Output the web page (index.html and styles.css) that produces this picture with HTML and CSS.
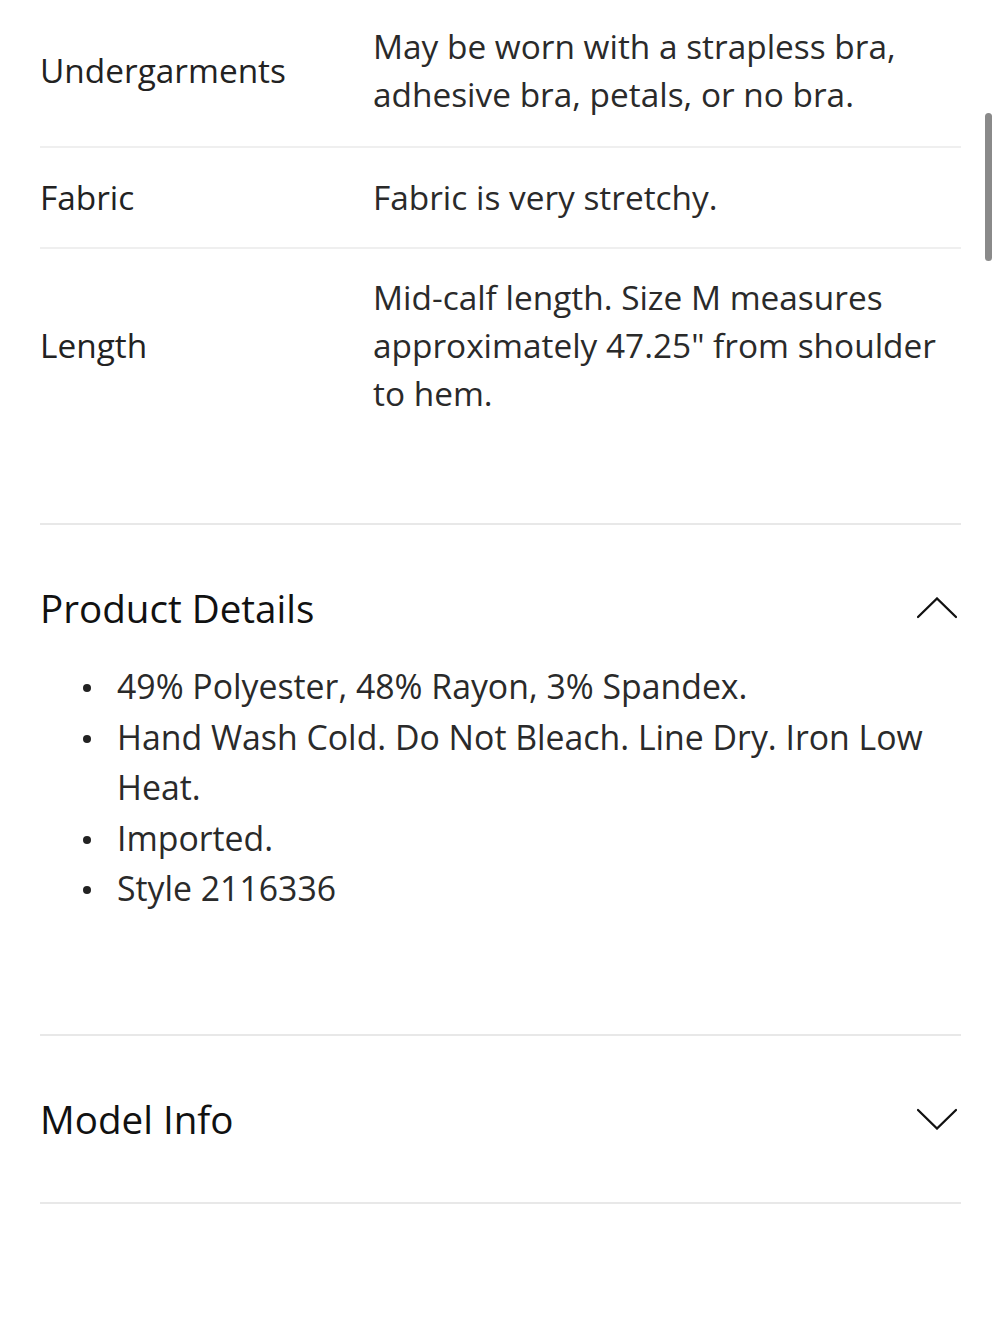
FILE: index.html
```html
<!DOCTYPE html>
<html lang="en">
<head>
<meta charset="utf-8">
<title>Product Details</title>
<link rel="stylesheet" href="styles.css">
</head>
<body>
<div class="page">
  <section class="specs">
    <div class="spec-row first">
      <div class="spec-label">Undergarments</div>
      <div class="spec-value">May be worn with a strapless bra, adhesive bra, petals, or no bra.</div>
    </div>
    <div class="spec-row">
      <div class="spec-label">Fabric</div>
      <div class="spec-value">Fabric is very stretchy.</div>
    </div>
    <div class="spec-row last">
      <div class="spec-label">Length</div>
      <div class="spec-value">Mid-calf length. Size M measures approximately 47.25" from shoulder to hem.</div>
    </div>
  </section>

  <section class="accordion open">
    <div class="acc-header">
      <h2 class="acc-title">Product Details</h2>
      <svg class="chevron" width="40" height="22" viewBox="0 0 40 22" aria-hidden="true">
        <polyline points="1,20 20,1.5 39,20" fill="none" stroke="#111" stroke-width="2.3" stroke-linecap="round" stroke-linejoin="miter"/>
      </svg>
    </div>
    <ul class="details">
      <li>49% Polyester, 48% Rayon, 3% Spandex.</li>
      <li>Hand Wash Cold. Do Not Bleach. Line Dry. Iron Low Heat.</li>
      <li>Imported.</li>
      <li>Style 2116336</li>
    </ul>
  </section>

  <section class="accordion">
    <div class="acc-header">
      <h2 class="acc-title">Model Info</h2>
      <svg class="chevron" width="40" height="22" viewBox="0 0 40 22" aria-hidden="true">
        <polyline points="1,2 20,20.5 39,2" fill="none" stroke="#111" stroke-width="2.3" stroke-linecap="round" stroke-linejoin="miter"/>
      </svg>
    </div>
  </section>
</div>
<div class="scrollbar"></div>
</body>
</html>
```

FILE: styles.css
```css
html, body {
  margin: 0;
  padding: 0;
  background: #ffffff;
}

body {
  font-family: "Open Sans", "Liberation Sans", sans-serif;
  color: #2a2a2a;
  width: 1000px;
  height: 1333px;
  overflow: hidden;
  position: relative;
}

.page {
  padding: 0 39px 0 40px;
}

.specs {
  padding-bottom: 80px;
  border-bottom: 2px solid #e8e8e8;
}

.spec-row {
  display: grid;
  grid-template-columns: 333px 1fr;
  align-items: center;
  padding: 25px 0 26px;
  border-bottom: 2px solid #efefef;
  font-size: 33.4px;
  line-height: 48px;
}

.spec-row.first {
  padding-top: 22px;
  padding-bottom: 28px;
}

.spec-row.last {
  border-bottom: none;
  padding-top: 24px;
}

.spec-label {
  color: #222;
}

.spec-value {
  color: #2a2a2a;
}

.accordion {
  border-bottom: 2px solid #e8e8e8;
}

.acc-header {
  display: flex;
  align-items: center;
  justify-content: space-between;
  padding: 60px 4px 60px 0;
  height: 46px;
}

.accordion.open .acc-header {
  padding-bottom: 0;
}

.acc-title {
  margin: 0;
  font-size: 38.6px;
  font-weight: 400;
  line-height: 46px;
  color: #111;
}

.chevron {
  display: block;
}

.details {
  list-style: none;
  margin: 30px 0 0;
  padding: 0 0 120px 43px;
  font-size: 33.8px;
  line-height: 50.5px;
  color: #2a2a2a;
}

.details li {
  display: flex;
  align-items: flex-start;
}

.details li::before {
  content: "";
  flex: 0 0 8px;
  width: 8px;
  height: 8px;
  border-radius: 50%;
  background: #222;
  margin: 23px 26px 0 0;
}

.scrollbar {
  position: absolute;
  left: 985px;
  top: 113px;
  width: 7px;
  height: 148px;
  border-radius: 4px;
  background: #8a8a8a;
}
```
